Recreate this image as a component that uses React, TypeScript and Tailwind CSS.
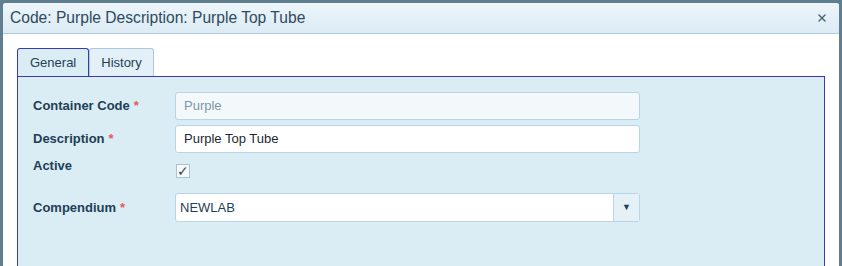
import { X } from 'lucide-react'

const font = { fontFamily: '"Liberation Sans", Arial, sans-serif' }

function Label({ text, required }: { text: string; required?: boolean }) {
  return (
    <div className="w-[142px] shrink-0 text-[13px] font-bold text-[#1e3f55]">
      {text}
      {required && <span className="ml-1 text-[#e35b5b]">*</span>}
    </div>
  )
}

export default function App() {
  return (
    <div className="h-[266px] w-[842px] overflow-hidden bg-[#5f7f8f] pl-[3px] pr-[3px] pt-[3px]" style={font}>
      <div className="flex h-full flex-col rounded-t-[3px] bg-white">
        <div className="flex h-[31px] shrink-0 items-center justify-between rounded-t-[3px] border-b border-[#aacbdc] bg-gradient-to-b from-[#edf5fa] to-[#dcebf4] pl-[7px] pr-[11px]">
          <span className="text-[15.6px] text-[#2c4b5e]">Code: Purple Description: Purple Top Tube</span>
          <X className="h-[12px] w-[12px] text-[#4a6a7c]" strokeWidth={3} />
        </div>

        <div className="flex flex-1 flex-col pl-[14px] pr-[14px] pt-[14px]">
          <div className="flex h-[28px] items-end">
            <div className="-mb-px flex h-[29px] items-center rounded-t-[3px] border border-b-0 border-[#3a3ab4] bg-[#daecf4] px-[12px] text-[13px] text-[#1e3f55]">
              General
            </div>
            <div className="flex h-[28px] items-center rounded-t-[3px] border border-b-0 border-[#aacbdc] bg-[#e3f0f7] px-[11px] text-[13px] text-[#1e3f55]">
              History
            </div>
          </div>
          <div className="flex-1 border border-b-0 border-[#3a3ab4] bg-[#daecf4] pl-[15px] pt-[15px]">
            <div className="flex items-center">
              <Label text="Container Code" required />
              <div className="flex h-[28px] w-[465px] items-center rounded-[3px] border border-[#b7d5e4] bg-[#f3f8fb] px-[8px] text-[13px] text-[#7d98a8]">
                Purple
              </div>
            </div>
            <div className="mt-[5px] flex items-center">
              <Label text="Description" required />
              <div className="flex h-[28px] w-[465px] items-center rounded-[3px] border border-[#b7d5e4] bg-white px-[8px] text-[13px] text-[#1a2a35]">
                Purple Top Tube
              </div>
            </div>
            <div className="mt-[1px] flex h-[32px] items-start">
              <div className="pt-[2px]">
                <Label text="Active" />
              </div>
              <div className="mt-[10px] ml-[1px] flex h-[14px] w-[14px] items-center justify-center border border-[#a9c3d1] bg-[#f6fafc] text-[14px] leading-none text-[#444]">
                ✓
              </div>
            </div>
            <div className="mt-[7px] flex items-center">
              <Label text="Compendium" required />
              <div className="flex h-[29px] w-[465px] items-stretch rounded-[3px] border border-[#b7d5e4] bg-white">
                <div className="flex flex-1 items-center px-[4px] text-[13px] text-[#1e3f55]">NEWLAB</div>
                <div className="flex w-[26px] items-center justify-center border-l border-[#b7d5e4] bg-[#e6f1f7]">
                  <span className="text-[9px] text-[#1e3f55]">▼</span>
                </div>
              </div>
            </div>
          </div>
        </div>
      </div>
    </div>
  )
}
